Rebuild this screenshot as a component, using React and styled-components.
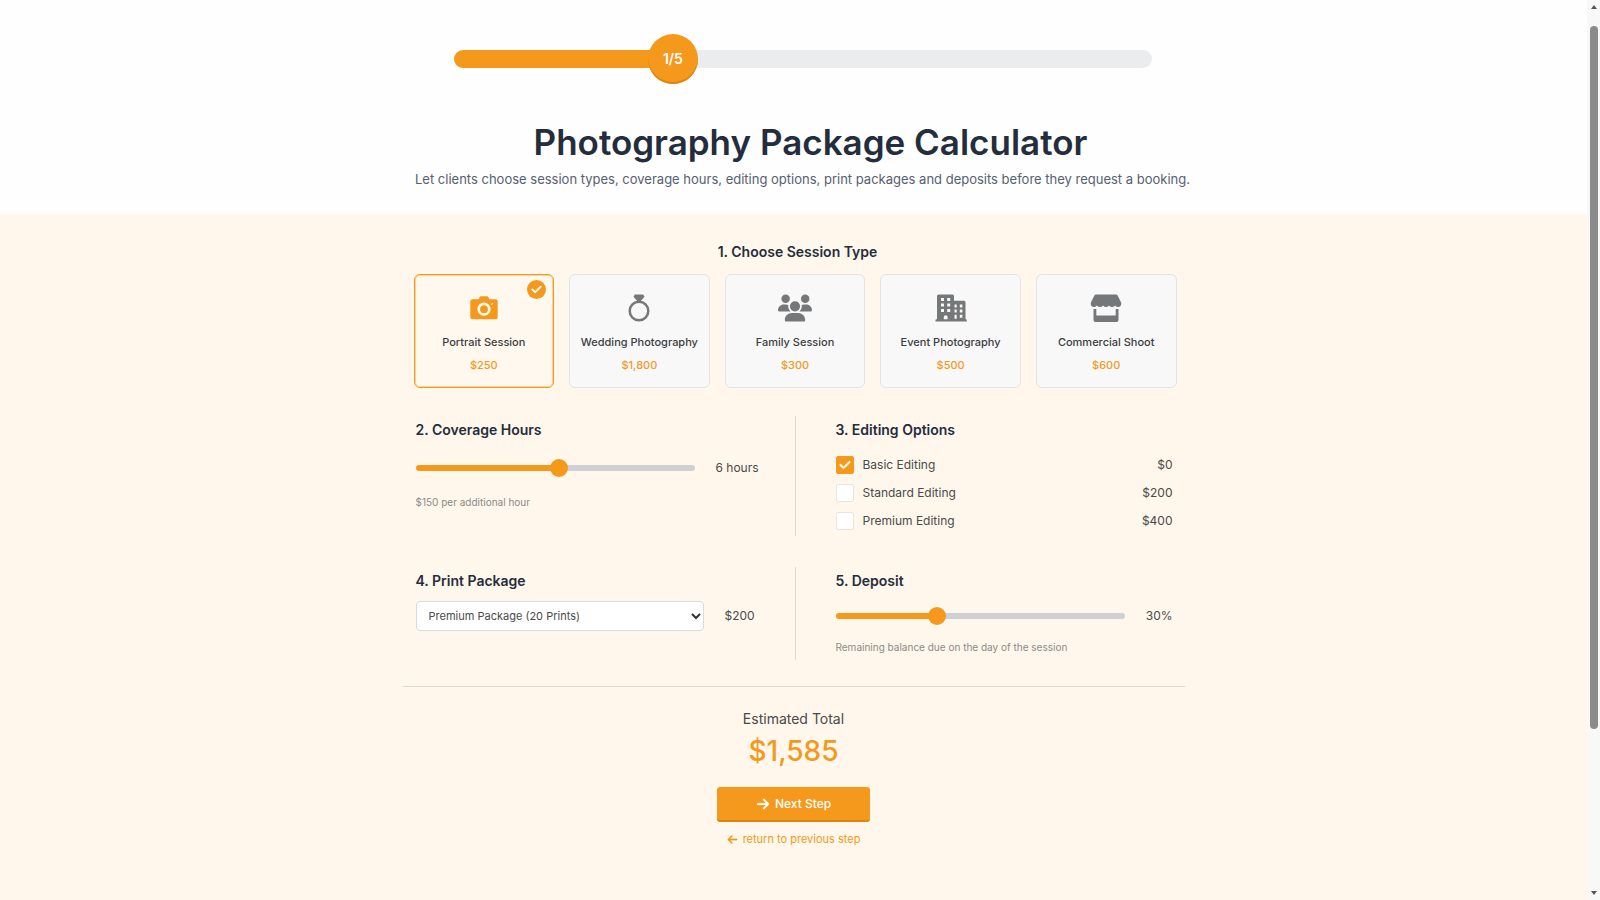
import React, {useState} from 'react';
import styled, {createGlobalStyle} from 'styled-components';
import {FaArrowLeft, FaArrowRight, FaCheck, FaUsers} from 'react-icons/fa6';

const Color = {
    orange: '#f4991b',
    orangeDark: '#dd8410',
    navy: '#242d3d',
    slate: '#566072',
    text: '#4a4a4a',
    muted: '#8a8a88',
    icon: '#757779',
    cream: '#fff7eb',
    card: '#f8f8f9',
    line: '#dcdad5',
    track: '#d0d0d4',
};

const CameraIcon = () => (
    <svg viewBox="0 0 28 24" width="28" height="24" aria-hidden="true">
        <path
            fill="currentColor"
            fillRule="evenodd"
            d="M9.6 1.2Q10 .3 11 .3h6q1 0 1.4.9l1 2.1H25.500q2.200 0 2.200 2.200v15.500q0 2.200-2.200 2.200h-23Q.3 23.200.3 21V5.500Q.3 3.300 2.500 3.300h6.100zM14 6.600a6.600 6.600 0 1 0 0 13.200a6.600 6.600 0 0 0 0-13.200zM14 9.300a3.900 3.900 0 1 1 0 7.800a3.900 3.900 0 0 1 0-7.800zM21 7.900l1.800-1.100v1.500l-1.500.6z"
        />
    </svg>
);

const RingIcon = () => (
    <svg viewBox="0 0 24 28" width="24" height="28" aria-hidden="true">
        <path fill="currentColor" d="M7.800.5h8.400l1.300 2.200-3.700 4.300h-3.600L6.500 2.700z"/>
        <circle cx="12" cy="17" r="9.300" fill="none" stroke="currentColor" strokeWidth="2.500"/>
    </svg>
);

const BuildingIcon = () => (
    <svg viewBox="0 0 32 28" width="32" height="28" aria-hidden="true">
        <path
            fill="currentColor"
            fillRule="evenodd"
            d="M3.500.500h14q1.500 0 1.500 1.500v4.700h10q1.500 0 1.500 1.500v17h.5q.8 0 .8.8v1.500H.500v-1.500q0-.8.800-.8H2V2Q2 .500 3.500.500z
            M6 4h3v3h-3zM12.200 4h3v3h-3zM6 9.500h3v3h-3zM12.200 9.500h3v3h-3zM6 15h3v3h-3zM12.200 15h3v3h-3z
            M19.500 10.500h2.200v3h-2.200zM24.800 10.500h2.600v3h-2.600zM19.500 15.600h2.200v3h-2.200zM24.800 15.600h2.600v3h-2.600zM19.500 20.700h2.200v4h-2.200zM24.800 20.700h2.600v3h-2.600z
            M8.800 25.300v-2.400q0-1.700 1.900-1.700t1.900 1.700v2.400z"
        />
    </svg>
);

const StoreIcon = () => (
    <svg viewBox="0 0 32 28" width="32" height="28" aria-hidden="true">
        <path
            fill="currentColor"
            d="M6 .500h20q1 0 1.500.8l3.500 7q1 2.200-.4 3.700q-1.300 1.300-3.100 1q-1.500-.2-2.400-1.500q-1.500 1.700-3.200 1.600q-1.700-.1-2.900-1.600q-1.400 1.600-3 1.600t-3-1.600q-1.200 1.500-2.900 1.600q-1.700.1-3.200-1.600q-.9 1.300-2.400 1.500q-1.800.3-3.100-1q-1.400-1.500-.4-3.700l3.500-7Q5 .500 6 .500z"
        />
        <path fill="currentColor" d="M3.500 15h2.800v6.500h19.400V15h2.800v11q0 2-2 2h-21q-2 0-2-2z"/>
    </svg>
);

const sessions = [
    {id: 'portrait', text: 'Portrait Session', price: '$250', icon: <CameraIcon/>},
    {id: 'wedding', text: 'Wedding Photography', price: '$1,800', icon: <RingIcon/>},
    {id: 'family', text: 'Family Session', price: '$300', icon: <FaUsers size={34}/>},
    {id: 'event', text: 'Event Photography', price: '$500', icon: <BuildingIcon/>},
    {id: 'commercial', text: 'Commercial Shoot', price: '$600', icon: <StoreIcon/>},
];

const editingOptions = [
    {id: 'basic', text: 'Basic Editing', price: '$0'},
    {id: 'standard', text: 'Standard Editing', price: '$200'},
    {id: 'premium', text: 'Premium Editing', price: '$400'},
];

const prints = [
    {text: 'Basic Package (5 Prints)', value: 50},
    {text: 'Standard Package (10 Prints)', value: 100},
    {text: 'Premium Package (20 Prints)', value: 200},
];

const Slider = ({min, max, step = 1, value, onChange, label}) => (
    <Range
        type="range"
        aria-label={label}
        min={min}
        max={max}
        step={step}
        value={value}
        onChange={(event) => onChange(parseFloat(event.target.value))}
        style={{'--fill': `${((value - min) / (max - min)) * 100}%`}}
    />
);

const App = () => {
    const [session, setSession] = useState('portrait');
    const [hours, setHours] = useState(6.2);
    const [editing, setEditing] = useState(['basic']);
    const [print, setPrint] = useState(200);
    const [deposit, setDeposit] = useState(30);

    const toggleEditing = (id) => {
        setEditing(editing.includes(id) ? editing.filter(el => el !== id) : [...editing, id]);
    };

    return (
        <Shell>
            <GlobalStyle/>
            <Page>
                <Header>
                    <Progress role="progressbar" aria-label="Step" aria-valuemin={0} aria-valuemax={5} aria-valuenow={1}>
                        <ProgressFill/>
                        <Step>1/5</Step>
                        <ProgressRest/>
                    </Progress>
                    <Title>Photography Package Calculator</Title>
                    <Subtitle>
                        Let clients choose session types, coverage hours, editing options, print packages and deposits
                        before they request a booking.
                    </Subtitle>
                </Header>
                <Form onSubmit={(event) => event.preventDefault()}>
                    <Heading $center>1. Choose Session Type</Heading>
                    <Cards>
                        {sessions.map(el => (
                            <Card
                                key={el.id}
                                type="button"
                                $active={session === el.id}
                                aria-pressed={session === el.id}
                                onClick={() => setSession(el.id)}
                            >
                                {session === el.id &&
                                    <Badge><FaCheck size={11} stroke="currentColor" strokeWidth={30}/></Badge>}
                                <CardIcon $active={session === el.id}>{el.icon}</CardIcon>
                                <CardName>{el.text}</CardName>
                                <CardPrice>{el.price}</CardPrice>
                            </Card>
                        ))}
                    </Cards>
                    <Row>
                        <Panel>
                            <Heading>2. Coverage Hours</Heading>
                            <Control $tall>
                                <Slider label="Coverage hours" min={0} max={12} step={0.1} value={hours} onChange={setHours}/>
                                <Value $width="42px">{Math.round(hours)} hours</Value>
                            </Control>
                            <Note>$150 per additional hour</Note>
                        </Panel>
                        <Panel $right>
                            <Heading>3. Editing Options</Heading>
                            <Options>
                                {editingOptions.map(el => (
                                    <Option key={el.id}>
                                        <CheckBox
                                            type="checkbox"
                                            checked={editing.includes(el.id)}
                                            onChange={() => toggleEditing(el.id)}
                                        />
                                        <Tick><FaCheck size={12} stroke="currentColor" strokeWidth={30}/></Tick>
                                        <span>{el.text}</span>
                                        <OptionPrice>{el.price}</OptionPrice>
                                    </Option>
                                ))}
                            </Options>
                        </Panel>
                    </Row>
                    <Row>
                        <Panel>
                            <Heading as="label" htmlFor="print">4. Print Package</Heading>
                            <Control>
                                <SelectWrap>
                                    <Select id="print" value={print} onChange={(event) => setPrint(event.target.value)}>
                                        {prints.map(el => <option key={el.value} value={el.value}>{el.text}</option>)}
                                    </Select>
                                    <Chevron viewBox="0 0 10 7" aria-hidden="true">
                                        <path d="M1 1l4 4 4-4" fill="none" stroke="currentColor" strokeWidth="2"/>
                                    </Chevron>
                                </SelectWrap>
                                <Value $width="33px">${print}</Value>
                            </Control>
                        </Panel>
                        <Panel $right>
                            <Heading>5. Deposit</Heading>
                            <Control>
                                <Slider label="Deposit" min={5} max={78} value={deposit} onChange={setDeposit}/>
                                <Value>{deposit}%</Value>
                            </Control>
                            <Note>Remaining balance due on the day of the session</Note>
                        </Panel>
                    </Row>
                    <Summary>
                        <TotalLabel>Estimated Total</TotalLabel>
                        <Total>$1,585</Total>
                        <NextButton type="submit">
                            <FaArrowRight size={14} stroke="currentColor" strokeWidth={10}/>Next Step
                        </NextButton>
                        <BackLink href="#previous">
                            <FaArrowLeft size={11} stroke="currentColor" strokeWidth={10}/>return to previous step
                        </BackLink>
                    </Summary>
                </Form>
            </Page>
            <ScrollBar aria-hidden="true">
                <Arrow viewBox="0 0 6 4"><path d="M3 0l3 4H0z"/></Arrow>
                <Thumb/>
                <Arrow viewBox="0 0 6 4"><path d="M3 4l3-4H0z"/></Arrow>
            </ScrollBar>
        </Shell>
    );
};

const GlobalStyle = createGlobalStyle`
    * {
        box-sizing: border-box;
    }

    body {
        margin: 0;
        background-color: ${Color.cream};
        color: ${Color.text};
        font-family: Inter, "Liberation Sans", sans-serif;
        font-size: 12px;
        line-height: 20px;
    }

    button, select, input {
        font-family: inherit;
    }
`;

const Shell = styled.div`
    display: flex;
    min-height: 100vh;
`;

const Page = styled.main`
    flex: 1;
    min-width: 0;
`;

const Header = styled.header`
    display: flex;
    flex-direction: column;
    align-items: center;
    padding: 34px 0 24px 18px;
    background-color: #fefefe;
`;

const Progress = styled.div`
    display: flex;
    align-items: center;
    width: 100%;
    max-width: 698px;
`;

const ProgressFill = styled.div`
    width: 30%;
    height: 18px;
    border-radius: 9px 0 0 9px;
    background-color: ${Color.orange};
`;

const ProgressRest = styled.div`
    flex: 1;
    height: 18px;
    border-radius: 0 9px 9px 0;
    background-color: #ebecee;
`;

const Step = styled.div`
    z-index: 1;
    display: flex;
    align-items: center;
    justify-content: center;
    width: 50px;
    height: 50px;
    margin: 0 -15px;
    border-radius: 50%;
    background-color: ${Color.orange};
    box-shadow: inset 0 -2px 0 ${Color.orangeDark};
    color: #fff;
    font-size: 14px;
    font-weight: 600;
`;

const Title = styled.h1`
    margin: 32px 0 0;
    padding-left: 16px;
    color: ${Color.navy};
    font-size: 35px;
    font-weight: 600;
    line-height: 52px;
    text-align: center;
`;

const Subtitle = styled.p`
    margin: 0;
    color: ${Color.slate};
    font-size: 13px;
    line-height: 22px;
    text-align: center;
`;

const Form = styled.form`
    max-width: 782px;
    margin: 0 auto;
    padding: 28px 0 50px;
`;

const Heading = styled.h2`
    display: block;
    margin: 0;
    color: ${Color.navy};
    font-size: 14px;
    font-weight: 600;
    line-height: 20px;
    text-align: ${props => props.$center ? 'center' : 'left'};
    ${props => props.$center && 'padding-left: 8px;'}
`;

const Cards = styled.div`
    display: grid;
    grid-template-columns: repeat(5, 1fr);
    gap: 15px;
    padding: 12px 8px 0 11px;

    @media (max-width: 700px) {
        grid-template-columns: repeat(2, 1fr);
    }
`;

const Card = styled.button`
    position: relative;
    display: flex;
    flex-direction: column;
    align-items: center;
    min-height: 114px;
    padding: 14px 0 0;
    border: 1px solid ${props => props.$active ? Color.orange : '#e3e3e5'};
    border-radius: 6px;
    background-color: ${props => props.$active ? '#fff8ee' : Color.card};
    box-shadow: ${props => props.$active ? 'inset 0 0 0 1px rgba(244, 153, 27, 0.4)' : 'none'};
    cursor: pointer;
`;

const Badge = styled.span`
    position: absolute;
    top: 5px;
    right: 7px;
    display: flex;
    align-items: center;
    justify-content: center;
    width: 19px;
    height: 19px;
    border-radius: 50%;
    background-color: ${Color.orange};
    color: #fff;
`;

const CardIcon = styled.span`
    display: flex;
    align-items: center;
    height: 38px;
    color: ${props => props.$active ? Color.orange : Color.icon};
`;

const CardName = styled.span`
    margin-top: 3px;
    color: #3d3d40;
    font-size: 11px;
    font-weight: 500;
    line-height: 24px;
    white-space: nowrap;
`;

const CardPrice = styled.span`
    color: ${Color.orange};
    font-size: 11px;
    font-weight: 500;
    line-height: 23px;
`;

const Row = styled.div`
    display: grid;
    grid-template-columns: 392fr 390fr;
    margin-top: 28px;

    & + & {
        margin-top: 31px;
    }

    @media (max-width: 700px) {
        grid-template-columns: 1fr;
    }
`;

const Panel = styled.section`
    padding: ${props => props.$right ? '4px 12px 5px 40px' : '4px 37px 5px 13px'};
    border-left: ${props => props.$right ? `1px solid ${Color.line}` : '0'};
`;

const Control = styled.div`
    display: flex;
    align-items: center;
    gap: 21px;
    height: ${props => props.$tall ? '36px' : '30px'};
    margin-top: 10px;
`;

const Range = styled.input`
    flex: 1;
    min-width: 0;
    height: 18px;
    margin: 0;
    appearance: none;
    background: transparent;
    cursor: pointer;

    &::-webkit-slider-runnable-track {
        height: 6px;
        border-radius: 3px;
        background: linear-gradient(to right, ${Color.orange} var(--fill), ${Color.track} var(--fill));
    }

    &::-webkit-slider-thumb {
        appearance: none;
        width: 18px;
        height: 18px;
        margin-top: -6px;
        border-radius: 50%;
        background-color: ${Color.orange};
    }
`;

const Value = styled.span`
    width: ${props => props.$width || 'auto'};
    white-space: nowrap;
`;

const Note = styled.p`
    margin: 8px 0 0;
    color: ${Color.muted};
    font-size: 10px;
    line-height: 16px;
`;

const Options = styled.div`
    display: grid;
    gap: 8px;
    margin-top: 15px;
`;

const Option = styled.label`
    display: grid;
    grid-template-columns: 18px 1fr auto;
    column-gap: 9px;
    align-items: center;
    cursor: pointer;
`;

const CheckBox = styled.input`
    grid-area: 1 / 1;
    width: 18px;
    height: 18px;
    margin: 0;
    appearance: none;
    border: 1px solid #e9e6e1;
    border-radius: 2px;
    background-color: #fff;

    &:checked {
        border-color: ${Color.orange};
        background-color: ${Color.orange};
    }
`;

const Tick = styled.span`
    grid-area: 1 / 1;
    display: none;
    justify-self: center;
    color: #fff;
    pointer-events: none;

    ${CheckBox}:checked + & {
        display: flex;
    }
`;

const OptionPrice = styled.span`
    text-align: right;
`;

const SelectWrap = styled.div`
    display: grid;
    flex: 1;
    align-items: center;
`;

const Select = styled.select`
    grid-area: 1 / 1;
    width: 100%;
    height: 30px;
    padding: 0 24px 0 12px;
    appearance: none;
    border: 1px solid #dadadc;
    border-radius: 4px;
    background-color: #fff;
    color: ${Color.text};
    font-size: 11px;
`;

const Chevron = styled.svg`
    grid-area: 1 / 1;
    justify-self: end;
    width: 10px;
    height: 7px;
    margin-right: 3px;
    color: #333;
    pointer-events: none;
`;

const Summary = styled.div`
    display: flex;
    flex-direction: column;
    align-items: center;
    margin-top: 26px;
    padding-top: 22px;
    border-top: 1px solid ${Color.line};
`;

const TotalLabel = styled.span`
    font-size: 14px;
`;

const Total = styled.strong`
    color: ${Color.orange};
    font-size: 28px;
    font-weight: 500;
    line-height: 44px;
`;

const NextButton = styled.button`
    display: flex;
    align-items: center;
    justify-content: center;
    gap: 5px;
    width: 153px;
    height: 35px;
    margin-top: 14px;
    border: 0;
    border-bottom: 2px solid ${Color.orangeDark};
    border-radius: 3px;
    background-color: ${Color.orange};
    color: #fff;
    font-size: 12px;
    font-weight: 500;
    cursor: pointer;
`;

const BackLink = styled.a`
    display: flex;
    align-items: center;
    gap: 5px;
    margin-top: 7px;
    color: ${Color.orange};
    font-size: 11px;
    text-decoration: none;
`;

const ScrollBar = styled.div`
    display: flex;
    flex-direction: column;
    align-items: center;
    width: 13px;
    padding: 5px 0;
    background-color: #f8f8f8;
`;

const Arrow = styled.svg`
    width: 6px;
    height: 4px;
    fill: #555;
`;

const Thumb = styled.div`
    width: 8px;
    height: 79%;
    margin: 17px 0 auto;
    border-radius: 4px;
    background-color: #8b8b8b;
`;

export default App;
